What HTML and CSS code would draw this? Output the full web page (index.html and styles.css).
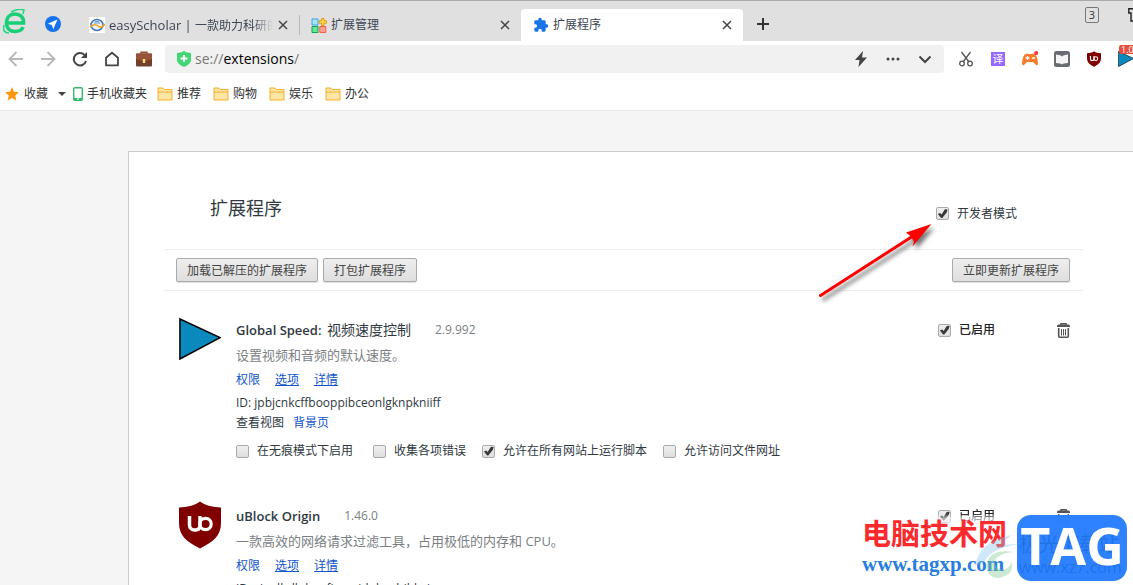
FILE: index.html
```html
<!DOCTYPE html>
<html lang="zh-CN">
<head>
<meta charset="utf-8">
<title>扩展程序</title>
<link rel="stylesheet" href="styles.css">
</head>
<body>
<svg class="defs" aria-hidden="true">
  <symbol id="close" viewBox="0 0 10 10"><path d="M1 1l8 8M9 1L1 9" fill="none" stroke="#444" stroke-width="1.5"/></symbol>
  <symbol id="folder" viewBox="0 0 16 14"><path d="M1 13V1h5l1.500 1.500H15V13z" fill="#ffe5a6" stroke="#f9ae2b"/><path d="M1 5h14" stroke="#f9ae2b"/></symbol>
  <symbol id="shield" viewBox="0 0 42 48"><path d="M21 .5C15 5 8 6 0 6.500V22c0 13 8 19 21 25.500C34 41 42 35 42 22V6.500C34 6 27 5 21 .5z" fill="#800000"/><path d="M10.500 15v9a5 5 0 0 0 5 5h1c3 0 4.500-2 4.500-5v-9" fill="none" stroke="#fff" stroke-width="3.500"/><circle cx="26.500" cy="23" r="5.700" fill="none" stroke="#fff" stroke-width="3.200"/></symbol>
  <symbol id="play" viewBox="0 0 44 44"><path d="M1 1v42l42-22.500z" fill="#0989bd" stroke="#000" stroke-width="1.600"/></symbol>
  <symbol id="trash" viewBox="0 0 13 15"><path d="M4 2V.8h5V2" fill="none" stroke="#555" stroke-width="1.500"/><path d="M0 4V3q0-1.500 1.500-1.500h10Q13 1.500 13 3v1z" fill="#555"/><path d="M1.700 5v8.200q0 1 1 1h7.600q1 0 1-1V5" fill="none" stroke="#555" stroke-width="1.600"/><path d="M4.500 6v6.500M6.500 6v6.500M8.500 6v6.500" stroke="#555"/></symbol>
</svg>

<header class="browser">
  <div class="tabs">
    <svg class="logo" viewBox="0 0 24 26"><path d="M3 14h17.500C21 8 17 5 12 5S3.500 8.500 3.500 14c0 5.500 4 8.500 8.500 8.500 4 0 7-1.500 8-4.500" fill="none" stroke="#18cf78" stroke-width="3.600"/><path d="M8 3q7-4 13-2l-1 4" fill="none" stroke="#20d880" stroke-width="1.500"/><path d="M1 16q-2 8 5 8" fill="none" stroke="#20d880" stroke-width="1.600"/></svg>
    <svg class="compass" viewBox="0 0 16 16"><circle cx="8" cy="8" r="8" fill="#1673ed"/><path d="M12.500 3.500L2.800 7.700l4 1.400 1.500 4.100z" fill="#fff"/></svg>
    <div class="tab">
      <svg class="favicon" viewBox="0 0 16 16"><path fill="#fff" d="M0 0h16v16H0z"/><ellipse cx="8" cy="8" rx="6" ry="5.500" fill="#e7f0fb" stroke="#3b77b9" stroke-width="1.500"/><path d="M5 6h6M6 4.500h4" stroke="#6d9acb"/><path d="M1 10q5-4 8-1t7-2" fill="none" stroke="#f5a21c" stroke-width="1.600"/></svg>
      <span class="title fade"><span class="latin">easyScholar | </span>一款助力科研的</span>
      <button class="close" aria-label="关闭"><svg><use href="#close"/></svg></button>
    </div>
    <div class="tab divided">
      <svg class="favicon" viewBox="0 0 16 16"><path d="M1 2h6v6H1z" fill="#a5e3fb" stroke="#3aa4e8"/><path d="M1 9.500h6v6H1z" fill="#65e79a" stroke="#14a34d"/><path d="M8.800 9.500h6v6h-6z" fill="#ffa18f" stroke="#f0604c"/><path d="M10.600 1.500h2.400v2.300h2.400v2.400H13v2.300h-2.400V6.200H8.300V3.800h2.300z" fill="#fddb4b" stroke="#e39911"/></svg>
      <span class="title">扩展管理</span>
      <button class="close" aria-label="关闭"><svg><use href="#close"/></svg></button>
    </div>
    <div class="tab active">
      <svg class="favicon" viewBox="0 0 24 24"><path fill="#1a73e8" d="M20.500 11H19V7c0-1.100-.9-2-2-2h-4V3.500a2.500 2.500 0 0 0-5 0V5H4c-1.100 0-2 .9-2 2v3.800h1.500a2.700 2.700 0 0 1 0 5.400H2V20c0 1.100.9 2 2 2h3.800v-1.500a2.700 2.700 0 0 1 5.400 0V22H17c1.100 0 2-.9 2-2v-4h1.500a2.500 2.500 0 0 0 0-5z"/></svg>
      <span class="title">扩展程序</span>
      <button class="close" aria-label="关闭"><svg><use href="#close"/></svg></button>
    </div>
    <button class="new-tab" aria-label="新标签页"><svg viewBox="0 0 12 12"><path d="M6 0v12M0 6h12" stroke="#333" stroke-width="2"/></svg></button>
    <span class="count">3</span>
    <svg class="skin" viewBox="0 0 16 16"><path d="M3 14V6H.8V1.700h4q3 3 6 0h4V6H13v8z" fill="none" stroke="#222" stroke-width="1.400"/></svg>
  </div>

  <div class="toolbar">
    <nav class="tools">
      <button aria-label="后退"><svg viewBox="0 0 16 16"><path d="M15 8H2M8.500 1L1.500 8l7 7" fill="none" stroke="#b8b8b8" stroke-width="1.800"/></svg></button>
      <button aria-label="前进"><svg viewBox="0 0 16 16"><path d="M1 8h13M7.500 1l7 7-7 7" fill="none" stroke="#b8b8b8" stroke-width="1.800"/></svg></button>
      <button aria-label="刷新"><svg viewBox="0 0 16 16"><path d="M13 4.500A6.200 6.200 0 1 0 14 10" fill="none" stroke="#444" stroke-width="2"/><path d="M15 1v6H9z" fill="#444"/></svg></button>
      <button aria-label="主页"><svg viewBox="0 0 16 16"><path d="M8 1.700l6 5v7.600H2V6.700z" fill="none" stroke="#444" stroke-width="1.800" stroke-linejoin="round"/></svg></button>
      <button aria-label="工具箱"><svg viewBox="0 0 16 16"><path d="M5 3V1.300h6V3" fill="none" stroke="#92512f" stroke-width="1.400"/><rect y="2.500" width="16" height="13" rx="1" fill="#70402c"/><path d="M0 3.500q0-1 1-1h14q1 0 1 1V8L8 10.500 0 8z" fill="#985438"/><path d="M6.800 8h2.400v4H6.800z" fill="#ffda70"/></svg></button>
    </nav>
    <div class="address">
      <svg class="safe" viewBox="0 0 14 16"><path d="M7 0q3 2 7 2v7q0 4-7 7-7-3-7-7V2q4 0 7-2z" fill="#43d675"/><path d="M7 4v7M3.500 7.500h7" stroke="#fff" stroke-width="2"/></svg>
      <div class="url" role="textbox" aria-label="地址栏"><span>se://</span>extensions<span>/</span></div>
      <button aria-label="加速"><svg viewBox="0 0 16 16"><path d="M10 0L2 9h4.500L5.500 16 14 6.500H9z" fill="#444"/></svg></button>
      <button aria-label="更多"><svg viewBox="0 0 16 16"><g fill="#444"><circle cx="3" cy="8" r="1.500"/><circle cx="8" cy="8" r="1.500"/><circle cx="13" cy="8" r="1.500"/></g></svg></button>
      <button aria-label="展开"><svg viewBox="0 0 16 16"><path d="M2.500 5.500L8 11l5.500-5.500" fill="none" stroke="#444" stroke-width="2"/></svg></button>
    </div>
    <nav class="tools plugins">
      <button aria-label="截图"><svg viewBox="0 0 16 16"><g fill="none" stroke="#555" stroke-width="1.300"><path d="M3.500 1l7.500 10M12.500 1L5 11"/><circle cx="4" cy="12.500" r="2.300"/><circle cx="12" cy="12.500" r="2.300"/></g></svg></button>
      <button class="translate" aria-label="翻译"><span>译</span></button>
      <button aria-label="游戏"><svg viewBox="0 0 16 16"><path d="M4 3q1-1 2 0h4q1-1 2 0 3 0 4 9 0 3-2 2l-3-3H5l-3 3q-2 1-2-2 1-9 4-9z" fill="#fa7b2c"/><path d="M5.500 5v4M3.500 7h4M10 7h3" stroke="#fff" stroke-width="1.300"/><circle cx="14.200" cy="2" r="2" fill="#f33"/></svg></button>
      <button aria-label="阅读"><svg viewBox="0 0 16 16"><rect width="16" height="16" rx="2.500" fill="#686c72"/><path d="M2 3.500l3 .5q2 0 3 1.500Q9 4 11 4l3-.5V12l-4 .5q-1 0-2 1-1-1-2-1L2 12z" fill="#f4f4f4"/></svg></button>
      <button aria-label="uBlock Origin"><svg><use href="#shield"/></svg></button>
      <button class="speed" aria-label="Global Speed"><svg><use href="#play"/></svg><span class="badge">1.0</span></button>
    </nav>
  </div>

  <nav class="bookmarks">
    <a href="#" class="favorites"><svg viewBox="0 0 16 16"><path d="M8 0l2.300 5.400 5.700.5-4.300 3.900L13 15.500 8 12.600l-5 2.900 1.300-5.700L0 5.900l5.700-.5z" fill="#ff960f"/></svg>收藏<i class="caret"></i></a>
    <a href="#" class="phone"><svg viewBox="0 0 10 14"><rect x=".7" y=".7" width="8.600" height="12.600" rx="1" fill="#fff" stroke="#38ba6c" stroke-width="1.400"/><path d="M1 11h8v2H1z" fill="#38ba6c"/><path d="M4 12h2" stroke="#fff"/></svg>手机收藏夹</a>
    <a href="#"><svg><use href="#folder"/></svg>推荐</a>
    <a href="#"><svg><use href="#folder"/></svg>购物</a>
    <a href="#"><svg><use href="#folder"/></svg>娱乐</a>
    <a href="#"><svg><use href="#folder"/></svg>办公</a>
  </nav>
</header>

<main class="page">
  <section class="panel">
    <div class="heading">
      <h1>扩展程序</h1>
      <label class="check"><input type="checkbox" checked>开发者模式</label>
    </div>
    <div class="actions">
      <button>加载已解压的扩展程序</button>
      <button>打包扩展程序</button>
      <button class="update">立即更新扩展程序</button>
    </div>

    <article class="extension">
      <svg class="ext-icon"><use href="#play"/></svg>
      <div class="details">
        <h2>Global Speed: <span class="zh">视频速度控制</span><span class="version">2.9.992</span></h2>
        <p class="description">设置视频和音频的默认速度。</p>
        <p class="links"><a href="#" class="plain">权限</a><a href="#">选项</a><a href="#">详情</a></p>
        <p class="ext-id">ID: jpbjcnkcffbooppibceonlgknpkniiff</p>
        <p class="views">查看视图<a href="#">背景页</a></p>
        <div class="options">
          <label class="check"><input type="checkbox">在无痕模式下启用</label>
          <label class="check"><input type="checkbox">收集各项错误</label>
          <label class="check"><input type="checkbox" checked>允许在所有网站上运行脚本</label>
          <label class="check"><input type="checkbox">允许访问文件网址</label>
        </div>
      </div>
      <div class="state">
        <label class="check"><input type="checkbox" checked>已启用</label>
        <button aria-label="删除"><svg><use href="#trash"/></svg></button>
      </div>
    </article>

    <article class="extension">
      <svg class="ext-icon"><use href="#shield"/></svg>
      <div class="details">
        <h2>uBlock Origin<span class="version">1.46.0</span></h2>
        <p class="description">一款高效的网络请求过滤工具，占用极低的内存和 CPU。</p>
        <p class="links"><a href="#" class="plain">权限</a><a href="#">选项</a><a href="#">详情</a></p>
        <p class="ext-id">ID: cjpalhdlnbpafiamejdnhcphjbkeiagm</p>
      </div>
      <div class="state veiled">
        <label class="check"><input type="checkbox" checked>已启用</label>
        <button aria-label="删除"><svg><use href="#trash"/></svg></button>
      </div>
    </article>
    <svg class="arrow" viewBox="0 0 120 85"><path d="M3.500 75.500L96 16" stroke="#f00" stroke-width="3" stroke-linecap="round"/><path d="M114.500 4L89 12.500l4.500 3.500 3.500 5.500-1.500 5z" fill="#f00"/></svg>
  </section>
</main>

<aside class="watermark">
  <div class="site"><strong>电脑技术网</strong><span>www.tagxp.com</span></div>
  <svg class="swirl" viewBox="0 0 48 46"><path d="M1 30Q6 6 38 0q-7 4-8 10 9-1 15-1-25 4-32 14-4 7-12 7z" fill="#8bc5ee"/><path d="M13 28q3-15 28-11-17 1-20 9-1 7 8 9 8-2 8-9 5 14-13 17-12 0-11-15z" fill="#81ca94"/></svg>
  <div class="tag">
    <div class="ghost"><span>极光下载站</span><small>www.xz7.com</small></div>
    <b>TAG</b>
  </div>
</aside>
</body>
</html>
```
FILE: styles.css
```css
* { box-sizing: border-box; }
html, body { height: 100%; }
body {
  margin: 0;
  display: flex;
  flex-direction: column;
  overflow: hidden;
  position: relative;
  background: #f5f5f5;
  color: #303942;
  font: 12px/18px "Open Sans", "Noto Sans CJK SC", sans-serif;
}
button { margin: 0; padding: 0; border: 0; background: none; color: inherit; font: inherit; }
svg { display: block; flex: none; }
.defs { position: absolute; width: 0; height: 0; }

.browser { flex: none; background: #fff; border-bottom: 1px solid #e6e6e6; }
.tabs { display: flex; height: 41px; background: #e0e0e0; border-top: 1px solid #aaa; padding-top: 8px; }
.logo { width: 24px; height: 26px; margin-left: 3px; }
.compass { width: 16px; height: 16px; margin: 7px 16px 0 18px; }
.tab { display: flex; align-items: center; flex: 0 1 222px; min-width: 0; gap: 4px; padding: 0 10px 0 12px; color: #3c4654; position: relative; }
.favicon { width: 16px; height: 16px; }
.title { flex: 1; min-width: 0; white-space: nowrap; overflow: hidden; }
.fade { mask-image: linear-gradient(to right, #000 88%, transparent); }
.latin { font-size: 13px; }
.close { display: grid; place-items: center; width: 12px; height: 16px; }
.close svg { width: 10px; height: 10px; }
.divided::before { content: ""; position: absolute; left: 0; top: 6px; width: 1px; height: 20px; background: #bbb; }
.active { background: #fff; border-radius: 4px 4px 0 0; }
.new-tab { display: grid; place-items: center; width: 40px; height: 30px; }
.new-tab svg { width: 12px; height: 12px; }
.count { width: 14px; height: 16px; margin: -2px 29px 0 auto; border: 1px solid #777; border-radius: 2px; font-size: 11px; line-height: 14px; text-align: center; color: #333; }
.skin { width: 16px; height: 16px; margin: -2px -11px 0 0; }

.toolbar { display: flex; align-items: center; height: 36px; }
.tools { display: flex; margin-right: 5px; }
.tools button { display: grid; place-items: center; width: 32px; height: 28px; position: relative; }
.tools svg, .address button svg { width: 16px; height: 16px; }
.address { flex: 1; display: flex; align-items: center; height: 28px; padding: 0 3px 0 12px; background: #f1f1f1; border-radius: 4px; }
.address button { display: grid; place-items: center; width: 32px; height: 28px; }
.safe { width: 14px; height: 16px; margin-right: 4px; }
.url { flex: 1; font-size: 14px; color: #000; }
.url span { color: #777; }
.plugins { margin: 0 -9px 0 6px; }
.translate span { width: 14px; height: 14px; background: #9668ff; color: #fff; font-size: 11px; line-height: 14px; }
.badge { position: absolute; left: 9px; top: 0; width: 24px; padding-left: 2px; background: #e84d3d; border-radius: 2px; color: #fff; font-size: 9px; line-height: 9px; text-align: left; }

.bookmarks { display: flex; align-items: center; gap: 12px; height: 33px; padding-left: 4px; }
.bookmarks a { display: flex; align-items: center; gap: 4px; color: #333; text-decoration: none; }
.bookmarks svg { width: 16px; height: 14px; }
.bookmarks .phone svg { width: 10px; }
.bookmarks .phone { margin-left: -5px; margin-right: -2px; }
.caret { border: 4px solid transparent; border-top-color: #444; border-bottom: 0; margin-left: 6px; }

.page { flex: 1; min-height: 0; padding: 40px 0 0 128px; }
.panel { position: relative; min-height: 100%; padding: 0 50px 0 35px; background: #fff; border: solid #ccc; border-width: 1px 0 0 1px; }
.heading { display: flex; align-items: center; justify-content: space-between; height: 98px; padding: 14px 66px 0 46px; border-bottom: 1px solid #eee; }
h1 { margin: 0; font-size: 18px; line-height: 24px; font-weight: 400; }
.check { display: flex; align-items: center; gap: 8px; white-space: nowrap; }
.heading .check { margin-top: 12px; }
input[type="checkbox"] { appearance: none; flex: none; width: 13px; height: 13px; margin: 0; border: 1px solid #aaa; border-radius: 2px; background: linear-gradient(#efefef, #dedede); }
input[type="checkbox"]:checked::before { content: ""; display: block; width: 11px; height: 11px; background: #383838; clip-path: polygon(8% 55%, 28% 45%, 42% 60%, 72% 12%, 96% 14%, 90% 38%, 48% 92%, 38% 92%); }
.actions { display: flex; gap: 5px; padding: 8px 13px 8px 12px; border-bottom: 1px solid #eee; }
.actions button { height: 24px; padding: 1px 10px 0; border: 1px solid #aaa; border-radius: 2px; background: linear-gradient(#eee, #dedede); box-shadow: 0 1px 1px #ddd; color: #444; }
.actions .update { margin-left: auto; }

.extension { display: flex; margin: 26px 0 40px; padding: 0 13px 0 15px; }
.extension + .extension { margin-top: 0; }
.ext-icon { width: 42px; height: 48px; margin: -2px 15px 0 0; }
.details { flex: 1; }
.details p { margin: 0; }
h2 { display: flex; align-items: center; height: 26px; margin: 0; font-size: 13px; font-weight: 600; white-space: pre; }
.zh { margin-left: 2px; font-size: 14px; font-weight: 400; }
.version { margin-left: 24px; font-size: 12px; font-weight: 400; color: #7b7f84; }
.details .description { font-size: 13px; line-height: 24px; color: #7b7f84; }
.details .links { display: flex; gap: 15px; line-height: 26px; }
a { color: #15c; }
.links .plain, .views a { text-decoration: none; }
.details .ext-id { margin-top: 1px; }
.views { line-height: 22px; }
.views a { margin-left: 9px; }
.options { display: flex; gap: 16px; margin-top: 5px; line-height: 24px; }
.options .check:first-child { margin-right: 4px; }
.state { display: flex; align-items: center; gap: 62px; height: 26px; font-weight: 500; color: #222; }
.state svg { width: 13px; height: 15px; }
.veiled { mask-image: linear-gradient(#000 40%, #0006 60%); }
.arrow { position: absolute; right: 196px; top: 68px; width: 120px; height: 85px; filter: drop-shadow(3px 4px 2px #777); }

.watermark { position: absolute; right: 6px; bottom: 4px; display: flex; align-items: flex-end; gap: 9px; }
.site { display: flex; flex-direction: column; width: 146px; white-space: nowrap; }
.site strong { font: 700 29px/30px "Noto Sans CJK SC", sans-serif; color: #fc292d; }
.site span { font: 700 21px/34px "Liberation Serif", serif; color: #287edf; }
.swirl { position: absolute; left: 112px; bottom: 0; width: 48px; height: 46px; opacity: .4; }
.tag { position: relative; width: 110px; height: 66px; border-radius: 14px; background: #1f78ffee; color: #fff; text-align: center; }
.tag b { position: relative; font: 700 52px/60px "Open Sans", sans-serif; }
.ghost { position: absolute; left: 2px; top: 18px; display: flex; flex-direction: column; color: #1262c6; opacity: .45; text-align: left; }
.ghost span { font-size: 20px; line-height: 24px; }
.ghost small { font-size: 16px; line-height: 20px; }
```
